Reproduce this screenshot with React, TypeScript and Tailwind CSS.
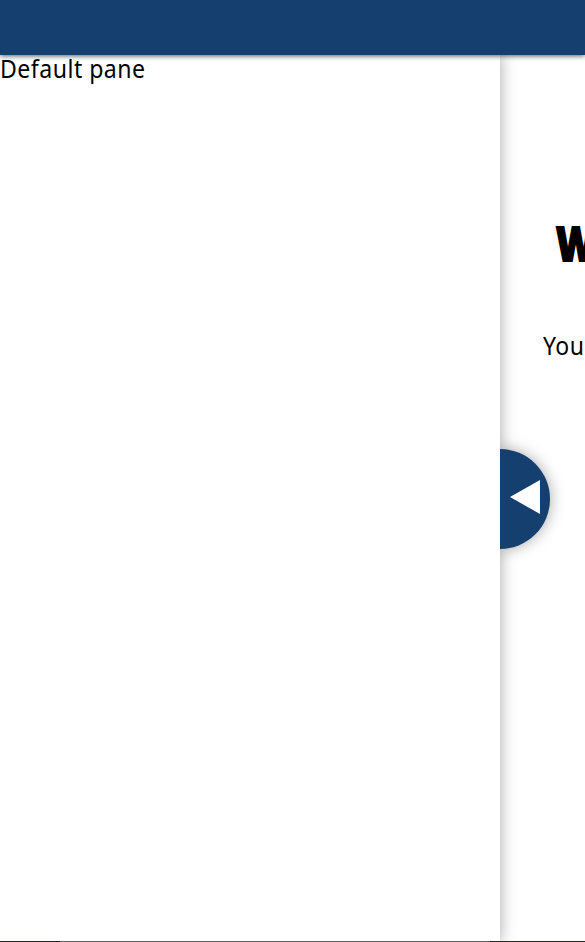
export default function App() {
  return (
    <div className="flex h-[942px] w-full flex-col overflow-hidden bg-white font-['Noto_Sans',sans-serif] text-black">
      <header className="relative z-20 h-[55px] shrink-0 bg-[#143f6f] shadow-[0_1px_5px_rgba(0,0,0,0.65)]" />
      <div className="flex h-[886px] shrink-0 overflow-hidden">
        <aside className="relative z-10 w-[500px] shrink-0 bg-white shadow-[0_0_15px_rgba(0,0,0,0.35)]">
          <p className="w-fit origin-left scale-x-[0.925] text-[25px] leading-[27px] tracking-[0.5px] whitespace-nowrap">Default pane</p>
          <button
            aria-label="Collapse pane"
            className="absolute top-[394px] left-full flex h-[100px] w-[50px] items-center rounded-r-full bg-[#143f6f] pl-[10px] shadow-[0_0_15px_rgba(0,0,0,0.35)] [clip-path:inset(-20px_-20px_-20px_0)]"
          >
            <svg width="30" height="34" viewBox="0 0 30 34" className="-mt-1" fill="white">
              <path d="M30 0V34L0 17Z" />
            </svg>
          </button>
        </aside>
        <main className="min-w-0 flex-1 overflow-hidden whitespace-nowrap">
          <h1 className="mt-[158px] ml-[56px] w-fit origin-left scale-x-[0.81] text-[47px] leading-[60px] font-black [-webkit-text-stroke:2px_black]">W</h1>
          <p className="mt-[58px] ml-[43px] w-fit origin-left scale-x-[0.92] text-[25px] leading-[29px] tracking-[0.5px]">You</p>
        </main>
      </div>
      <footer className="flex h-px shrink-0">
        <div className="w-[60px] bg-[#242220]" />
        <div className="w-[430px] bg-[#5e5e60]" />
        <div className="flex-1 bg-[#25261e]" />
      </footer>
    </div>
  );
}
